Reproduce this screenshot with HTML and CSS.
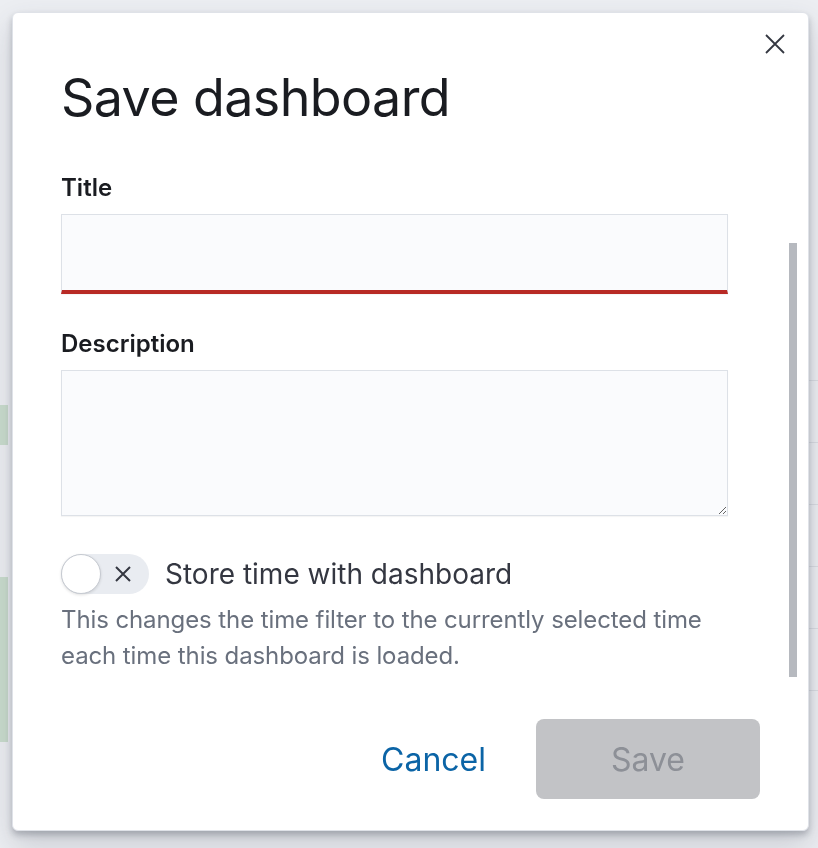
FILE: index.html
```html
<!DOCTYPE html>
<html lang="en">
<head>
  <meta charset="UTF-8">
  <meta name="viewport" content="width=device-width, initial-scale=1.0">
  <title>Save dashboard</title>
  <link rel="stylesheet" href="styles.css">
</head>
<body>
  <!-- faded dashboard behind the modal -->
  <div class="page">
    <div class="page-left">
      <div class="blob small"></div>
      <div class="blob big"></div>
    </div>
    <div class="page-right">
      <div class="row"></div>
      <div class="row"></div>
      <div class="row"></div>
      <div class="row"></div>
      <div class="row"></div>
      <div class="row"></div>
    </div>
  </div>

  <div class="overlay">
    <div class="modal">
      <button class="close" aria-label="Close">
        <svg width="20" height="20" viewBox="0 0 20 20"><path d="M1 1 L19 19 M19 1 L1 19" stroke="#343741" stroke-width="1.8"/></svg>
      </button>

      <div class="modal-header">
        <h1>Save dashboard</h1>
      </div>

      <div class="modal-body">
        <div class="form-row">
          <label for="title-input">Title</label>
          <input type="text" id="title-input" class="field invalid">
        </div>
        <div class="form-row">
          <label for="desc-input">Description</label>
          <textarea id="desc-input" class="field area"></textarea>
        </div>
        <div class="switch-row">
          <button class="switch" role="switch" aria-checked="false">
            <span class="knob"></span>
            <svg class="switch-x" width="18" height="18" viewBox="0 0 18 18"><path d="M2 2 L16 16 M16 2 L2 16" stroke="#343741" stroke-width="2"/></svg>
          </button>
          <span class="switch-label">Store time with dashboard</span>
        </div>
        <div class="help">This changes the time filter to the currently selected time each time this dashboard is loaded.</div>
      </div>

      <div class="modal-footer">
        <button class="btn-empty">Cancel</button>
        <button class="btn-save" disabled>Save</button>
      </div>

      <div class="scroll-thumb"></div>
    </div>
  </div>
</body>
</html>
```

FILE: styles.css
```css
body {
  margin: 0;
  background-color: #eceef2;
  font-family: Inter, "Noto Sans", sans-serif;
  color: #343741;
  height: 100vh;
  overflow: hidden;
}

.page {
  display: flex;
  justify-content: space-between;
  height: 100%;
}

.page-left {
  width: 40px;
  display: flex;
  flex-direction: column;
  padding-top: 405px;
  gap: 132px;
}

.blob {
  width: 8px;
  background: #c9dccd;
}

.blob.small {
  height: 40px;
}

.blob.big {
  height: 165px;
}

.page-right {
  width: 40px;
  padding-top: 380px;
}

.row {
  height: 61px;
  border-top: 1px solid #d9dce2;
}

.overlay {
  position: fixed;
  inset: 0;
  padding: 12px 10px 0 12px;
}

.modal {
  position: relative;
  width: 797px;
  height: 819px;
  box-sizing: border-box;
  background: #fff;
  border: 1px solid #dfe2e8;
  border-radius: 6px;
  box-shadow: 0 4px 6px rgba(60, 66, 80, 0.3), 0 14px 30px rgba(60, 66, 80, 0.2);
  display: flex;
  flex-direction: column;
}

.close {
  position: absolute;
  top: 21px;
  right: 23px;
  width: 20px;
  height: 20px;
  padding: 0;
  border: none;
  background: none;
  cursor: pointer;
}

.close svg {
  display: block;
}

.modal-header {
  padding: 50px 48px 0;
}

.modal-header h1 {
  margin: 0;
  font-size: 52px;
  line-height: 70px;
  font-weight: 400;
  letter-spacing: -0.6px;
  color: #1a1c21;
}

.modal-body {
  flex: 1;
  padding: 37px 80px 0 48px;
}

.form-row {
  display: flex;
  flex-direction: column;
  margin-bottom: 32px;
}

.form-row label {
  font-size: 24px;
  line-height: 36px;
  font-weight: 600;
  color: #1a1c21;
  margin-bottom: 8px;
}

.field {
  box-sizing: border-box;
  width: 100%;
  margin: 0;
  border: 1px solid #dde1e7;
  background: #fafbfd;
  font-family: inherit;
  font-size: 28px;
  outline: none;
  box-shadow: 0 1px 1px rgba(0, 0, 0, 0.04);
}

.field.invalid {
  height: 80px;
  border-bottom: 4px solid #b82a25;
}

.field.area {
  height: 146px;
  resize: vertical;
}

.form-row:nth-child(2) {
  margin-bottom: 38px;
}

.switch-row {
  display: flex;
  align-items: center;
  gap: 16px;
}

.switch {
  position: relative;
  width: 88px;
  height: 40px;
  padding: 0;
  border: none;
  border-radius: 20px;
  background: #e9ecf1;
  cursor: pointer;
}

.knob {
  position: absolute;
  left: 0;
  top: 0;
  width: 40px;
  height: 40px;
  box-sizing: border-box;
  border-radius: 50%;
  background: #fff;
  border: 1px solid #c6cad1;
  box-shadow: 0 1px 3px rgba(0, 0, 0, 0.12);
}

.switch-x {
  position: absolute;
  left: 53px;
  top: 11px;
}

.switch-label {
  font-size: 28px;
  line-height: 40px;
  color: #343741;
}

.help {
  margin-top: 8px;
  font-size: 24px;
  line-height: 36px;
  letter-spacing: -0.1px;
  color: #69707d;
  padding-right: 10px;
}

.modal-footer {
  display: flex;
  justify-content: flex-end;
  align-items: center;
  padding: 0 48px 31px;
}

.btn-empty {
  padding: 0 16px;
  margin-right: 34px;
  border: none;
  background: none;
  font-family: inherit;
  font-size: 32px;
  font-weight: 400;
  color: #0b64a6;
  cursor: pointer;
}

.btn-save {
  width: 224px;
  height: 80px;
  border: none;
  border-radius: 8px;
  background: #c2c3c6;
  font-family: inherit;
  font-size: 32px;
  font-weight: 400;
  color: #8d9097;
}

.scroll-thumb {
  position: absolute;
  top: 230px;
  right: 11px;
  width: 8px;
  height: 434px;
  background: #b6b9bf;
}
```
